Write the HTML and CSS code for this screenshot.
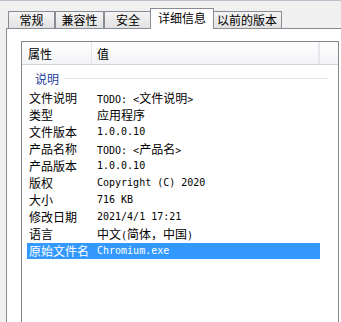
FILE: index.html
```html
<!DOCTYPE html>
<html lang="zh-CN">
<head>
    <meta charset="UTF-8">
    <title>属性 - 详细信息</title>
    <link rel="stylesheet" href="styles.css">
</head>
<body>
    <div class="tabs">
        <div class="tab tab-general">常规</div>
        <div class="tab tab-compat">兼容性</div>
        <div class="tab tab-security">安全</div>
        <div class="tab tab-details active">详细信息</div>
        <div class="tab tab-versions">以前的版本</div>
    </div>

    <div class="panel">
        <div class="list">
            <div class="list-head">
                <div class="col-name">属性</div>
                <div class="col-value">值</div>
                <div class="col-rest"></div>
            </div>

            <div class="group">说明</div>

            <div class="row"><div class="name">文件说明</div><div class="value">TODO: &lt;<span class="zh">文件说明</span>&gt;</div></div>
            <div class="row"><div class="name">类型</div><div class="value"><span class="zh">应用程序</span></div></div>
            <div class="row"><div class="name">文件版本</div><div class="value">1.0.0.10</div></div>
            <div class="row"><div class="name">产品名称</div><div class="value">TODO: &lt;<span class="zh">产品名</span>&gt;</div></div>
            <div class="row"><div class="name">产品版本</div><div class="value">1.0.0.10</div></div>
            <div class="row"><div class="name">版权</div><div class="value">Copyright (C) 2020</div></div>
            <div class="row"><div class="name">大小</div><div class="value">716 KB</div></div>
            <div class="row"><div class="name">修改日期</div><div class="value">2021/4/1 17:21</div></div>
            <div class="row"><div class="name">语言</div><div class="value"><span class="zh">中文</span>(<span class="zh">简体，中国</span>)</div></div>
            <div class="row selected"><div class="name">原始文件名</div><div class="value">Chromium.exe</div></div>
        </div>
    </div>
</body>
</html>
```

FILE: styles.css
```css
html, body {
    margin: 0;
    height: 100%;
    overflow: hidden;
}

body {
    box-sizing: border-box;
    background-color: #f0f0f0;
    border-top: 1px solid #b9c1cb;
    font-family: "Noto Sans CJK SC", sans-serif;
    font-size: 12px;
    color: #000;
}

/* 选项卡 */
.tabs {
    display: flex;
    align-items: flex-end;
    height: 27px;
    padding-left: 8px;
    position: relative;
    z-index: 1;
}

.tab {
    box-sizing: border-box;
    height: 17px;
    line-height: 16px;
    text-align: center;
    border: 1px solid #898c95;
    border-bottom: none;
    background: linear-gradient(#f4f4f4, #e2e2e2);
}

.tab-general { width: 47px; }
.tab-compat { width: 49px; }
.tab-security { width: 48px; }
.tab-versions { width: 70px; }

.tab.active {
    width: 64px;
    height: 21px;
    line-height: 18px;
    margin: 0 -2px -1px;
    background: #fff;
    position: relative;
    z-index: 2;
}

/* 面板 */
.panel {
    margin-left: 6px;
    height: 281px;
    background-color: #fff;
    border-top: 1px solid #898c95;
    border-left: 1px solid #898c95;
    padding: 12px 0 0 14px;
}

.list {
    box-sizing: border-box;
    width: 318px;
    height: 281px;
    border: 1px solid #828790;
    border-bottom: none;
}

.list-head {
    display: flex;
    height: 22px;
    border-bottom: 1px solid #d5d5d5;
    background: linear-gradient(#ffffff, #f2f3f5);
}

.col-name {
    box-sizing: border-box;
    width: 70px;
    padding-left: 6px;
    line-height: 24px;
    border-right: 1px solid #e3e5e8;
}

.col-value {
    box-sizing: border-box;
    width: 228px;
    padding-left: 5px;
    line-height: 24px;
    border-right: 2px solid #e6e8eb;
}

.col-rest {
    flex: 1;
}

.group {
    display: flex;
    align-items: center;
    height: 17px;
    line-height: 17px;
    padding: 5px 10px 3px 13px;
    color: #1e3c9e;
}

.group::after {
    content: "";
    flex: 1;
    height: 1px;
    margin-left: 5px;
    background-color: #dfe4ee;
}

.row {
    display: flex;
    width: 293px;
    height: 16px;
    line-height: 16px;
    margin: 0 0 1px 5px;
}

.name {
    box-sizing: border-box;
    width: 64px;
    padding-left: 2px;
    white-space: nowrap;
}

.value {
    padding-left: 6px;
    font-family: "DejaVu Sans Mono", monospace;
    font-size: 10px;
    white-space: nowrap;
}

.value .zh {
    font-family: "Noto Sans CJK SC", sans-serif;
    font-size: 12px;
}

.row.selected {
    background-color: #3399ff;
    color: #fff;
}
```
